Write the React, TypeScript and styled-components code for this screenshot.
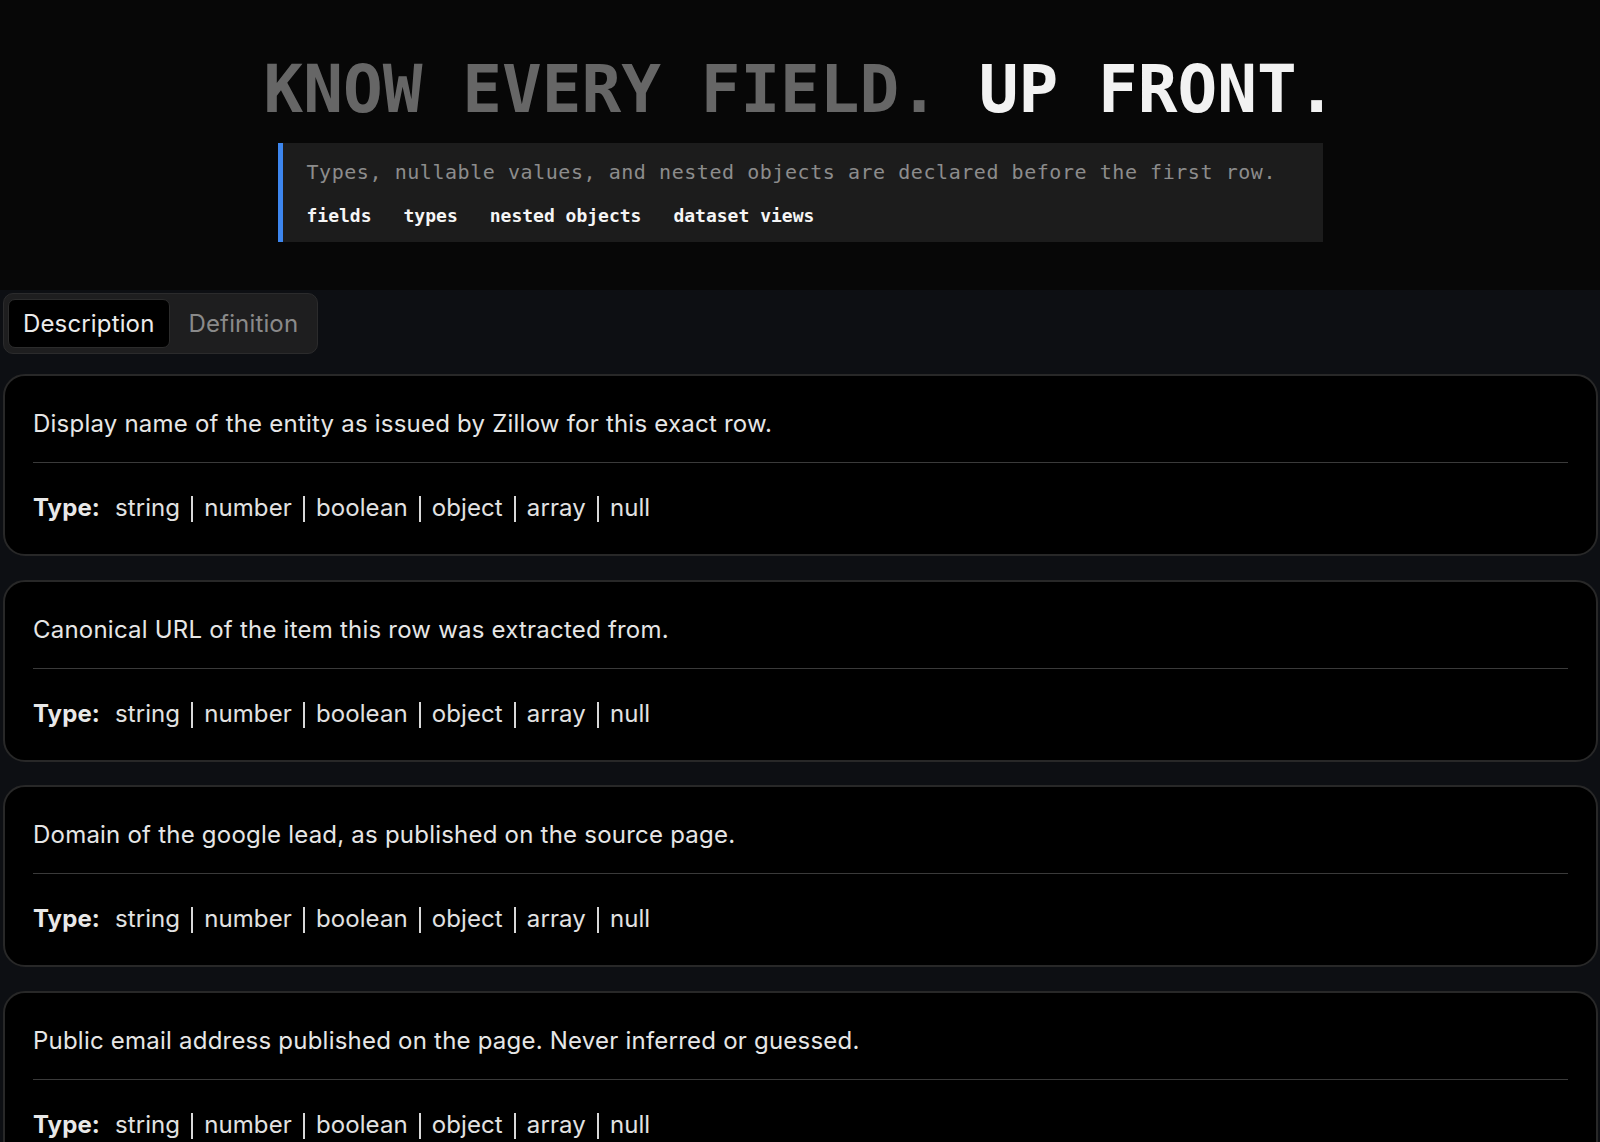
import React, { useState } from 'react';
import styled, { createGlobalStyle } from 'styled-components';

const GlobalStyle = createGlobalStyle`
  html, body {
    margin: 0;
    padding: 0;
    background: #0d0f13;
  }
  * {
    box-sizing: border-box;
  }
`;

const Page = styled.div`
  min-height: 100vh;
  background: #0d0f13;
  font-family: Inter, 'Noto Sans', sans-serif;
`;

const Hero = styled.header`
  background: #070707;
  padding: 57px 0 48px;
  display: flex;
  flex-direction: column;
  align-items: center;
`;

const Title = styled.h1`
  margin: 0;
  font-family: 'DejaVu Sans Mono', 'Liberation Mono', monospace;
  font-size: 66px;
  line-height: 66px;
  font-weight: 700;
  color: #666666;
  white-space: pre;
`;

const Bright = styled.span`
  color: #f2f2f2;
`;

const Callout = styled.div`
  width: 1045px;
  margin-top: 20px;
  background: #1c1c1c;
  border-left: 5px solid #3d86ee;
  padding: 14px 24px 13px;
  display: flex;
  flex-direction: column;
  gap: 15px;
`;

const Lead = styled.p`
  margin: 0;
  font-family: 'DejaVu Sans Mono', 'Liberation Mono', monospace;
  font-size: 20px;
  line-height: 30px;
  letter-spacing: 0.55px;
  color: #8c8c8c;
`;

const Tags = styled.div`
  display: flex;
  gap: 32px;
`;

const Tag = styled.span`
  font-family: 'DejaVu Sans Mono', 'Liberation Mono', monospace;
  font-size: 18px;
  line-height: 27px;
  font-weight: 700;
  color: #f5f5f5;
`;

const Body = styled.main`
  padding: 3px 2px 24px 3px;
  display: flex;
  flex-direction: column;
  gap: 20px;
`;

const TabList = styled.div`
  align-self: flex-start;
  display: flex;
  gap: 4px;
  padding: 5px 4px;
  background: #1e1e1f;
  border: 1px solid #2b2b2c;
  border-radius: 10px;
`;

interface TabProps {
  active: boolean;
}

const Tab = styled.button<TabProps>`
  height: 49px;
  padding: 0 14px;
  font-family: Inter, 'Noto Sans', sans-serif;
  font-size: 24px;
  letter-spacing: 0.15px;
  color: ${({ active }) => (active ? '#ececec' : '#8a8a8a')};
  background: ${({ active }) => (active ? '#000000' : 'transparent')};
  border: 1px solid ${({ active }) => (active ? '#2c2c2c' : 'transparent')};
  border-radius: 7px;
  cursor: pointer;
  &:focus {
    outline: none;
  }
`;

const CardList = styled.div`
  display: flex;
  flex-direction: column;
  gap: 23.5px;
`;

const Card = styled.section`
  background: #000000;
  border: 2px solid #282828;
  border-radius: 22px;
  padding: 30px 28px 28px;
`;

const Desc = styled.p`
  margin: 0;
  font-size: 24px;
  line-height: 36px;
  letter-spacing: 0.22px;
  color: #e6e6e6;
`;

const Divider = styled.hr`
  margin: 20px 0 27px;
  height: 0;
  border: none;
  border-top: 1px solid #3a3a3a;
`;

const TypeLine = styled.div`
  font-size: 24px;
  line-height: 36px;
  letter-spacing: 0.1px;
  color: #e2e2e2;
  display: flex;
  align-items: center;
`;

const TypeLabel = styled.strong`
  font-weight: 700;
  margin-right: 15px;
  color: #e8e8e8;
`;

const Sep = styled.span`
  display: inline-block;
  width: 2px;
  height: 26px;
  background: #d8d8d8;
  margin: 2px 11px 0;
`;

const fields = [
  'Display name of the entity as issued by Zillow for this exact row.',
  'Canonical URL of the item this row was extracted from.',
  'Domain of the google lead, as published on the source page.',
  'Public email address published on the page. Never inferred or guessed.',
];

const types = ['string', 'number', 'boolean', 'object', 'array', 'null'];

function FieldCard({ text }: { text: string }) {
  return (
    <Card>
      <Desc>{text}</Desc>
      <Divider />
      <TypeLine>
        <TypeLabel>Type:</TypeLabel>
        {types.map((t, i) => (
          <React.Fragment key={t}>
            {i > 0 && <Sep />}
            <span>{t}</span>
          </React.Fragment>
        ))}
      </TypeLine>
    </Card>
  );
}

export default function App() {
  const [tab, setTab] = useState('Description');
  return (
    <Page>
      <GlobalStyle />
      <Hero>
        <Title>
          KNOW EVERY FIELD. <Bright>UP FRONT.</Bright>
        </Title>
        <Callout>
          <Lead>Types, nullable values, and nested objects are declared before the first row.</Lead>
          <Tags>
            <Tag>fields</Tag>
            <Tag>types</Tag>
            <Tag>nested objects</Tag>
            <Tag>dataset views</Tag>
          </Tags>
        </Callout>
      </Hero>
      <Body>
        <TabList>
          {['Description', 'Definition'].map((t) => (
            <Tab key={t} active={tab === t} onClick={() => setTab(t)}>
              {t}
            </Tab>
          ))}
        </TabList>
        <CardList>
          {fields.map((f) => (
            <FieldCard key={f} text={f} />
          ))}
        </CardList>
      </Body>
    </Page>
  );
}
